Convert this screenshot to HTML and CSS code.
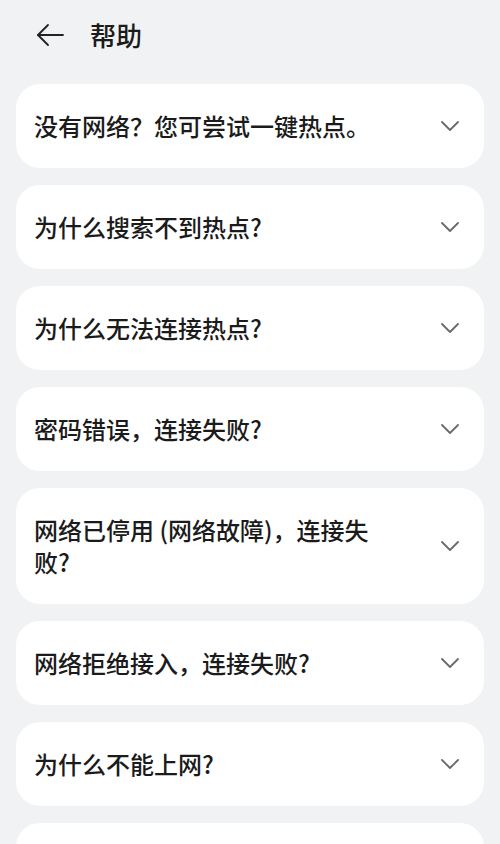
FILE: index.html
```
<!DOCTYPE html>
<html lang="zh-CN">
<head>
<meta charset="utf-8">
<link rel="stylesheet" href="styles.css">
</head>
<body>
<div class="page">
  <header class="topbar">
    <svg class="back" width="28" height="24" viewBox="0 0 28 24" fill="none" stroke="#222" stroke-width="1.8" stroke-linecap="round" stroke-linejoin="round">
      <path d="M27 12H2"/>
      <path d="M12 2L2 12l10 10"/>
    </svg>
    <h1 class="title">帮助</h1>
  </header>
  <main class="list">
    <div class="card"><span class="q">没有网络？您可尝试一键热点。</span><svg class="chev" viewBox="0 0 18 10"><path d="M1 1l8 8 8-8"/></svg></div>
    <div class="card"><span class="q">为什么搜索不到热点?</span><svg class="chev" viewBox="0 0 18 10"><path d="M1 1l8 8 8-8"/></svg></div>
    <div class="card"><span class="q">为什么无法连接热点?</span><svg class="chev" viewBox="0 0 18 10"><path d="M1 1l8 8 8-8"/></svg></div>
    <div class="card"><span class="q">密码错误，连接失败?</span><svg class="chev" viewBox="0 0 18 10"><path d="M1 1l8 8 8-8"/></svg></div>
    <div class="card"><span class="q">网络已停用 (网络故障)，连接失败?</span><svg class="chev" viewBox="0 0 18 10"><path d="M1 1l8 8 8-8"/></svg></div>
    <div class="card"><span class="q">网络拒绝接入，连接失败?</span><svg class="chev" viewBox="0 0 18 10"><path d="M1 1l8 8 8-8"/></svg></div>
    <div class="card"><span class="q">为什么不能上网?</span><svg class="chev" viewBox="0 0 18 10"><path d="M1 1l8 8 8-8"/></svg></div>
    <div class="card"><span class="q">&nbsp;</span></div>
  </main>
</div>
</body>
</html>
```
FILE: styles.css
```
html, body {
  margin: 0;
  padding: 0;
  background: #f1f2f4;
}
body {
  font-family: "Noto Sans CJK SC", "Noto Sans", sans-serif;
  color: #1b1b1b;
  overflow: hidden;
  height: 844px;
}
.page {
  padding: 0 16px;
}
.topbar {
  height: 72px;
  display: flex;
  align-items: center;
  padding-left: 20px;
  gap: 26px;
  box-sizing: border-box;
  padding-bottom: 2px;
}
.back {
  display: block;
  flex: none;
}
.title {
  margin: 0;
  font-size: 26px;
  font-weight: 500;
  line-height: 1;
  color: #1b1b1b;
}
.list {
  margin-top: 12px;
  display: flex;
  flex-direction: column;
  gap: 17px;
}
.card {
  background: #ffffff;
  border-radius: 24px;
  padding: 26px 22px 26px 18px;
  display: flex;
  align-items: center;
  min-height: 32px;
}
.q {
  width: 366px;
  font-size: 24px;
  font-weight: 500;
  line-height: 32px;
  color: #1b1b1b;
}
.chev {
  width: 18px;
  height: 10px;
  margin-left: auto;
  margin-right: 3px;
  fill: none;
  stroke: #6a6a6a;
  stroke-width: 1.8;
  stroke-linecap: round;
  stroke-linejoin: round;
  flex: none;
}
```
